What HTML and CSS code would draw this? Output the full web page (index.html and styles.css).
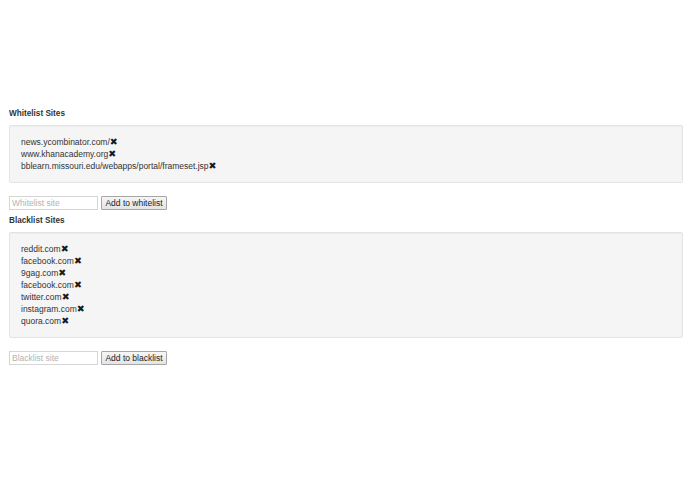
FILE: index.html
```html
<!DOCTYPE html>
<html>
<head>
<meta charset="utf-8">
<link rel="stylesheet" href="styles.css">
</head>
<body>
<div class="page">
  <section class="group">
    <div class="label">Whitelist Sites</div>
    <div class="well">
      <div class="item">news.ycombinator.com/<span class="x">✖</span></div>
      <div class="item">www.khanacademy.org<span class="x">✖</span></div>
      <div class="item">bblearn.missouri.edu/webapps/portal/frameset.jsp<span class="x">✖</span></div>
    </div>
    <div class="form">
      <input class="field" type="text" placeholder="Whitelist site">
      <button class="btn">Add to whitelist</button>
    </div>
  </section>
  <section class="group">
    <div class="label">Blacklist Sites</div>
    <div class="well">
      <div class="item">reddit.com<span class="x">✖</span></div>
      <div class="item">facebook.com<span class="x">✖</span></div>
      <div class="item">9gag.com<span class="x">✖</span></div>
      <div class="item">facebook.com<span class="x">✖</span></div>
      <div class="item">twitter.com<span class="x">✖</span></div>
      <div class="item">instagram.com<span class="x">✖</span></div>
      <div class="item">quora.com<span class="x">✖</span></div>
    </div>
    <div class="form">
      <input class="field" type="text" placeholder="Blacklist site">
      <button class="btn">Add to blacklist</button>
    </div>
  </section>
</div>
</body>
</html>
```

FILE: styles.css
```css
html, body {
  margin: 0;
  padding: 0;
  background: #fff;
}
body {
  font-family: "Liberation Sans", Arial, sans-serif;
  font-size: 8.5px;
  color: #333;
}
.page {
  padding: 108px 12px 0 9px;
}
.group {
  display: flex;
  flex-direction: column;
}
.label {
  font-weight: bold;
  font-size: 8.2px;
  line-height: 12px;
  margin-bottom: 5px;
  color: #333;
}
.well {
  background: #f5f5f5;
  border: 1px solid #e3e3e3;
  border-radius: 2px;
  padding: 10px 11px;
  margin-bottom: 13px;
  box-shadow: inset 0 1px 1px rgba(0,0,0,0.03);
}
.item {
  height: 12px;
  line-height: 12px;
  color: #333;
}
.x {
  font-family: "DejaVu Sans", sans-serif;
  font-size: 9.5px;
  line-height: 0;
  color: #1a1a1a;
}
.form {
  display: flex;
  align-items: center;
  gap: 3px;
  margin-bottom: 5px;
}
.field {
  box-sizing: border-box;
  width: 89px;
  height: 14px;
  margin: 0;
  padding: 0 2px;
  border: 1px solid #d6d6d6;
  font-family: "Liberation Sans", Arial, sans-serif;
  font-size: 8.5px;
  color: #333;
  background: #fff;
  outline: none;
}
.field::placeholder {
  color: #b3b3b3;
}
.btn {
  box-sizing: border-box;
  width: 66px;
  height: 14px;
  margin: 0;
  padding: 0;
  border: 1px solid #a6a6a6;
  border-radius: 1px;
  background: linear-gradient(#f6f6f6, #e4e4e4);
  font-family: "Liberation Sans", Arial, sans-serif;
  font-size: 8.5px;
  color: #222;
  line-height: 12px;
}
```
